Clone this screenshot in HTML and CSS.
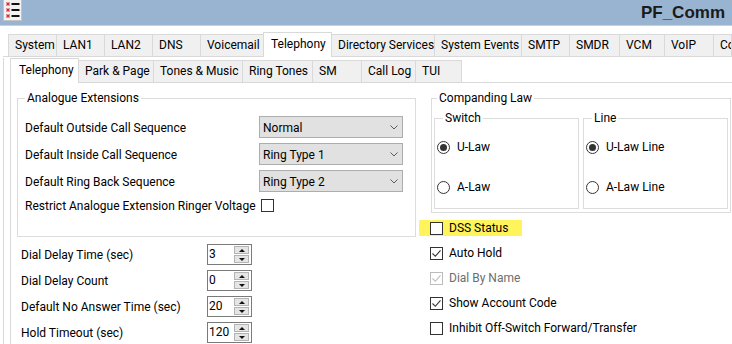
FILE: index.html
```html
<!DOCTYPE html>
<html lang="en">
<head>
    <meta charset="UTF-8">
    <meta name="viewport" content="width=device-width, initial-scale=1.0">
    <title>PF_Comm - Telephony</title>
    <link rel="stylesheet" href="styles.css">
</head>
<body>

    <!-- Title bar -->
    <div class="titlebar">
        <span class="app-icon">
            <svg width="17" height="19" viewBox="0 0 17 19">
                <path d="M2.5 1.5l3 3M5.5 1.5l-3 3M2.5 7.5l3 3M5.5 7.5l-3 3M2.5 13.5l3 3M5.5 13.5l-3 3" stroke="#d7262b" stroke-width="1.2" fill="none"/>
                <rect x="7.5" y="2" width="8" height="2" fill="#111"/>
                <rect x="7.5" y="8" width="8" height="2" fill="#111"/>
                <rect x="7.5" y="14" width="8" height="2" fill="#111"/>
            </svg>
        </span>
        <span class="title">PF_Comm</span>
    </div>

    <div class="outer">
        <!-- Main tabs -->
        <div class="tabs tabs-main">
            <span class="tab">System</span>
            <span class="tab">LAN1</span>
            <span class="tab">LAN2</span>
            <span class="tab">DNS</span>
            <span class="tab">Voicemail</span>
            <span class="tab active">Telephony</span>
            <span class="tab">Directory Services</span>
            <span class="tab">System Events</span>
            <span class="tab">SMTP</span>
            <span class="tab">SMDR</span>
            <span class="tab">VCM</span>
            <span class="tab">VoIP</span>
            <span class="tab">Co</span>
        </div>

        <div class="outer-panel">
            <!-- Telephony sub tabs -->
            <div class="tabs tabs-sub">
                <span class="tab active">Telephony</span>
                <span class="tab">Park &amp; Page</span>
                <span class="tab">Tones &amp; Music</span>
                <span class="tab">Ring Tones</span>
                <span class="tab">SM</span>
                <span class="tab">Call Log</span>
                <span class="tab">TUI</span>
            </div>

            <div class="panel">
                <div class="col-left">
                    <fieldset class="group analogue">
                        <legend>Analogue Extensions</legend>
                        <div class="field">
                            <label>Default Outside Call Sequence</label>
                            <div class="select"><span>Normal</span><svg class="chevron" width="8" height="5" viewBox="0 0 8 5"><path d="M0.5 0.5l3.5 3.5 3.5-3.5" stroke="#5c5c5c" fill="none"/></svg></div>
                        </div>
                        <div class="field">
                            <label>Default Inside Call Sequence</label>
                            <div class="select"><span>Ring Type 1</span><svg class="chevron" width="8" height="5" viewBox="0 0 8 5"><path d="M0.5 0.5l3.5 3.5 3.5-3.5" stroke="#5c5c5c" fill="none"/></svg></div>
                        </div>
                        <div class="field">
                            <label>Default Ring Back Sequence</label>
                            <div class="select"><span>Ring Type 2</span><svg class="chevron" width="8" height="5" viewBox="0 0 8 5"><path d="M0.5 0.5l3.5 3.5 3.5-3.5" stroke="#5c5c5c" fill="none"/></svg></div>
                        </div>
                        <div class="field check-field">
                            <label>Restrict Analogue Extension Ringer Voltage</label>
                            <span class="checkbox"></span>
                        </div>
                    </fieldset>

                    <div class="spin-list">
                        <div class="spin-row">
                            <label>Dial Delay Time (sec)</label>
                            <div class="spin"><span class="spin-value">3</span><span class="spin-buttons"><span class="spin-up"></span><span class="spin-down"></span></span></div>
                        </div>
                        <div class="spin-row">
                            <label>Dial Delay Count</label>
                            <div class="spin"><span class="spin-value">0</span><span class="spin-buttons"><span class="spin-up"></span><span class="spin-down"></span></span></div>
                        </div>
                        <div class="spin-row">
                            <label>Default No Answer Time (sec)</label>
                            <div class="spin"><span class="spin-value">20</span><span class="spin-buttons"><span class="spin-up"></span><span class="spin-down"></span></span></div>
                        </div>
                        <div class="spin-row">
                            <label>Hold Timeout (sec)</label>
                            <div class="spin"><span class="spin-value">120</span><span class="spin-buttons"><span class="spin-up"></span><span class="spin-down"></span></span></div>
                        </div>
                    </div>
                </div>

                <div class="col-right">
                    <fieldset class="group companding">
                        <legend>Companding Law</legend>
                        <div class="law-groups">
                            <fieldset class="group sub">
                                <legend>Switch</legend>
                                <div class="radio-row"><span class="radio on"></span>U-Law</div>
                                <div class="radio-row"><span class="radio"></span>A-Law</div>
                            </fieldset>
                            <fieldset class="group sub">
                                <legend>Line</legend>
                                <div class="radio-row"><span class="radio on"></span>U-Law Line</div>
                                <div class="radio-row"><span class="radio"></span>A-Law Line</div>
                            </fieldset>
                        </div>
                    </fieldset>

                    <ul class="checks">
                        <li class="highlight"><span class="checkbox"></span>DSS Status</li>
                        <li><span class="checkbox"><svg width="11" height="11" viewBox="0 0 11 11"><path d="M1.5 5.5l2.8 2.8 5.2-6" stroke="#333" stroke-width="1.1" fill="none"/></svg></span>Auto Hold</li>
                        <li class="disabled"><span class="checkbox"><svg width="11" height="11" viewBox="0 0 11 11"><path d="M1.5 5.5l2.8 2.8 5.2-6" stroke="#bcbcbc" stroke-width="1.1" fill="none"/></svg></span>Dial By Name</li>
                        <li><span class="checkbox"><svg width="11" height="11" viewBox="0 0 11 11"><path d="M1.5 5.5l2.8 2.8 5.2-6" stroke="#333" stroke-width="1.1" fill="none"/></svg></span>Show Account Code</li>
                        <li><span class="checkbox"></span>Inhibit Off-Switch Forward/Transfer</li>
                    </ul>
                </div>
            </div>
        </div>
    </div>

</body>
</html>
```

FILE: styles.css
```css
body {
    font-family: Roboto, "Noto Sans", sans-serif;
    font-size: 12px;
    color: #000;
    background-color: #fff;
    margin: 0;
    height: 344px;
    overflow: hidden;
}
.titlebar {
    height: 25px;
    background-color: #99b4d1;
    border-bottom: 1px solid #cfcfcf;
    display: flex;
    justify-content: space-between;
    align-items: flex-start;
}
.app-icon {
    margin-left: 3px;
    width: 19px;
    height: 21px;
    box-sizing: border-box;
    background-color: #f2f2f2;
    border: 1px solid #c4c4c4;
    border-top: none;
    display: flex;
    align-items: center;
    justify-content: center;
}
.title {
    font-family: "Liberation Sans", Arial, sans-serif;
    font-weight: bold;
    font-size: 17px;
    line-height: 26px;
    padding-right: 7px;
    color: #1a1a1a;
}
.outer {
    margin: 6px 0 0 3px;
}

/* tab strips */
.tabs {
    display: grid;
    align-items: end;
    height: 24px;
    border-bottom: 1px solid #d9d9d9;
}
.tabs-main {
    padding-left: 5px;
    grid-template-columns: 49px 48px 48px 48px 63px 68px 103px 87px 48px 50px 45px 49px 1fr;
}
.tabs-sub {
    margin-top: 1px;
    grid-template-columns: 69px 75px 89px 70px 49px 54px 46px 1fr;
}
.tab {
    height: 22px;
    box-sizing: border-box;
    border: 1px solid #d9d9d9;
    border-left: none;
    border-bottom: none;
    background-color: #f0f0f0;
    padding-left: 6px;
    line-height: 21px;
    white-space: nowrap;
    overflow: hidden;
}
.tab:first-child {
    border-left: 1px solid #d9d9d9;
}
.tab.active {
    height: 25px;
    margin-bottom: -1px;
    margin-left: -1px;
    background-color: #fff;
    border-left: 1px solid #d9d9d9;
    line-height: 22px;
    padding-left: 7px;
}
.tab.active:first-child {
    margin-left: 0;
}
.tabs-sub .tab.active {
    padding-left: 8px;
}

.outer-panel {
    border-left: 1px solid #d9d9d9;
    padding-left: 6px;
    height: 300px;
}
.panel {
    border-left: 1px solid #d9d9d9;
    padding: 7px 0 0 6px;
    display: grid;
    grid-template-columns: 399px 300px;
    column-gap: 14px;
    align-items: start;
}

/* group boxes */
.group {
    margin: 0;
    border: 1px solid #dcdcdc;
    padding: 0 7px;
    min-width: 0;
}
.group legend {
    padding: 0 2px;
    line-height: 16px;
}
.analogue {
    padding-bottom: 23px;
}
.field {
    display: flex;
    align-items: center;
    height: 22px;
    margin-top: 5px;
}
.field:first-of-type {
    margin-top: 10px;
}
.field label {
    width: 234px;
    flex-shrink: 0;
    white-space: nowrap;
    padding-top: 1px;
}
.check-field {
    height: 16px;
}
.check-field .checkbox {
    margin-left: 2px;
}
.select {
    width: 144px;
    height: 22px;
    box-sizing: border-box;
    border: 1px solid #adadad;
    background-color: #e1e1e1;
    display: flex;
    align-items: center;
    justify-content: space-between;
    padding: 1px 4px 0 3px;
}

.checkbox {
    width: 13px;
    height: 13px;
    box-sizing: border-box;
    border: 1px solid #333;
    background-color: #fff;
    display: inline-flex;
    align-items: center;
    justify-content: center;
    flex-shrink: 0;
}

/* spin boxes */
.spin-list {
    margin-top: 7px;
}
.spin-row {
    display: flex;
    align-items: center;
    height: 21px;
    margin-bottom: 5px;
}
.spin-row label {
    width: 186px;
    padding-left: 4px;
    padding-top: 1px;
}
.spin {
    width: 45px;
    height: 21px;
    box-sizing: border-box;
    border: 1px solid #7a7a7a;
    display: flex;
}
.spin-value {
    flex: 1;
    padding-left: 1px;
    line-height: 18px;
}
.spin-buttons {
    width: 15px;
    margin: 1px 2px 1px 0;
    display: flex;
    flex-direction: column;
    gap: 1px;
}
.spin-up, .spin-down {
    flex: 1;
    box-sizing: border-box;
    border: 1px solid #b4b4b4;
    background-color: #e5e5e5;
    display: flex;
    align-items: center;
    justify-content: center;
}
.spin-up::after, .spin-down::after {
    content: "";
    border-left: 3px solid transparent;
    border-right: 3px solid transparent;
}
.spin-up::after {
    border-bottom: 3px solid #111;
}
.spin-down::after {
    border-top: 3px solid #111;
}

/* companding law */
.companding {
    margin-left: 1px;
    width: 300px;
    box-sizing: border-box;
    padding: 0 2px 3px;
}
.companding > legend {
    margin-left: 3px;
}
.law-groups {
    display: grid;
    grid-template-columns: 1fr 1fr;
    column-gap: 4px;
    margin-top: 4px;
}
.group.sub {
    padding: 0 2px 13px;
}
.group.sub legend {
    margin-left: 6px;
}
.radio-row {
    display: flex;
    align-items: center;
    gap: 7px;
    height: 16px;
    margin-top: 24px;
}
.radio-row:first-of-type {
    margin-top: 13px;
}
.radio {
    width: 13px;
    height: 13px;
    box-sizing: border-box;
    border: 1px solid #333;
    border-radius: 50%;
    display: flex;
    align-items: center;
    justify-content: center;
}
.radio.on::after {
    content: "";
    width: 7px;
    height: 7px;
    border-radius: 50%;
    background-color: #333;
}

/* option checkboxes */
.checks {
    list-style-type: none;
    margin: 7px 0 0;
    padding: 0;
}
.checks li {
    display: flex;
    align-items: center;
    gap: 6px;
    height: 16px;
    margin-bottom: 9px;
}
.checks li.highlight {
    background-color: #fff45c;
    margin-left: -11px;
    padding-left: 11px;
    width: 92px;
}
.checks li.disabled {
    color: #6d6d6d;
}
.checks li.disabled .checkbox {
    border-color: #bcbcbc;
}
```
